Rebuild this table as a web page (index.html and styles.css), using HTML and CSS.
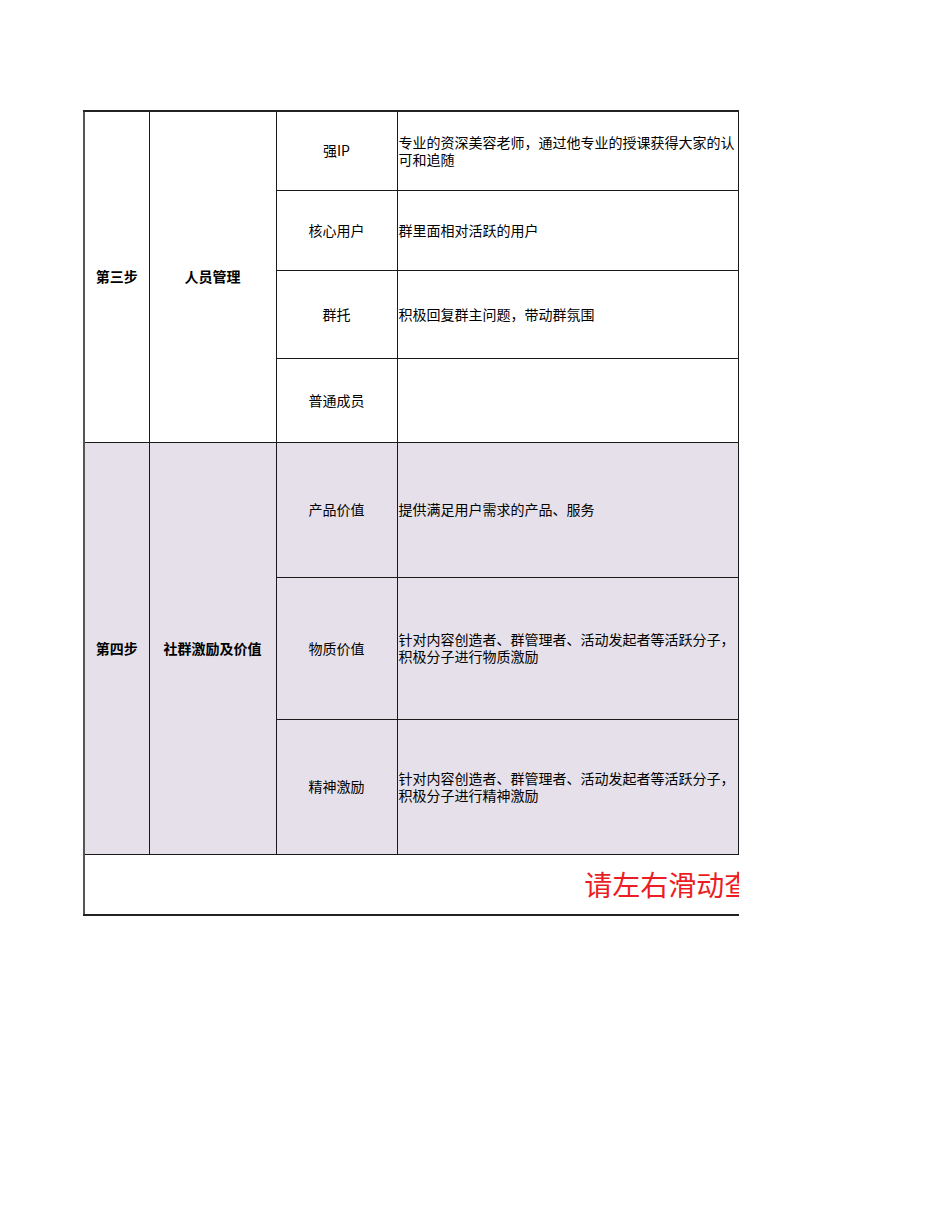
FILE: index.html
```html
<!DOCTYPE html>
<html lang="zh-CN">
<head>
<meta charset="utf-8">
<title>社群运营</title>
<link rel="stylesheet" href="styles.css">
</head>
<body>
<div class="page">
  <div class="clip">
    <table class="sheet">
      <colgroup>
        <col class="c1"><col class="c2"><col class="c3"><col class="c4"><col class="c5">
      </colgroup>
      <tbody>
        <tr class="h79">
          <td class="step" rowspan="4">第三步</td>
          <td class="step" rowspan="4">人员管理</td>
          <td class="name">强IP</td>
          <td class="desc">专业的资深美容老师，通过他专业的授课获得大家的认可和追随</td>
          <td class="extra" rowspan="4"></td>
        </tr>
        <tr class="h80">
          <td class="name">核心用户</td>
          <td class="desc">群里面相对活跃的用户</td>
        </tr>
        <tr class="h88">
          <td class="name">群托</td>
          <td class="desc">积极回复群主问题，带动群氛围</td>
        </tr>
        <tr class="h84">
          <td class="name">普通成员</td>
          <td class="desc"></td>
        </tr>
        <tr class="h135 alt">
          <td class="step" rowspan="3">第四步</td>
          <td class="step" rowspan="3">社群激励及价值</td>
          <td class="name">产品价值</td>
          <td class="desc">提供满足用户需求的产品、服务</td>
          <td class="extra" rowspan="3"></td>
        </tr>
        <tr class="h142 alt">
          <td class="name">物质价值</td>
          <td class="desc">针对内容创造者、群管理者、活动发起者等活跃分子，积极分子进行物质激励</td>
        </tr>
        <tr class="h135 alt">
          <td class="name">精神激励</td>
          <td class="desc">针对内容创造者、群管理者、活动发起者等活跃分子，积极分子进行精神激励</td>
        </tr>
        <tr class="h61">
          <td class="foot" colspan="5">请左右滑动查看更多</td>
        </tr>
      </tbody>
    </table>
  </div>
</div>
</body>
</html>
```

FILE: styles.css
```css
html, body {
  margin: 0;
  padding: 0;
  background: #ffffff;
}

body {
  font-family: "Noto Sans CJK SC", "Noto Sans", "Liberation Sans", sans-serif;
  color: #000000;
}

.page {
  padding-top: 110px;
  padding-left: 83px;
}

.clip {
  width: 656px;
  overflow: hidden;
}

.sheet {
  border-collapse: collapse;
  table-layout: fixed;
  width: 1252px;
  font-size: 14px;
  line-height: 17px;
}

.c1 { width: 65px; }
.c2 { width: 127px; }
.c3 { width: 121px; }
.c4 { width: 341px; }
.c5 { width: 598px; }

.sheet td {
  border: 1px solid #1a1a1a;
  padding: 0;
  vertical-align: middle;
  overflow: hidden;
}

.sheet tr:first-child td {
  border-top: 2px solid #222222;
}

.sheet td.step:first-child,
.sheet td.foot {
  border-left: 2px solid #555555;
}

.h79 { height: 79px; }
.h80 { height: 80px; }
.h88 { height: 88px; }
.h84 { height: 84px; }
.h135 { height: 135px; }
.h142 { height: 142px; }
.h61 { height: 61px; }

.alt td {
  background: #e5e0ea;
}

.step {
  text-align: center;
  font-weight: bold;
}

.name {
  text-align: center;
}

.desc {
  text-align: left;
  padding-left: 1px !important;
}

.extra {
  border-left: 1px solid #1a1a1a;
}

.foot {
  text-align: center;
  color: #ec1c24;
  font-size: 28px;
  line-height: 32px;
  border-bottom: 2px solid #222222 !important;
  background: #ffffff;
}
```
